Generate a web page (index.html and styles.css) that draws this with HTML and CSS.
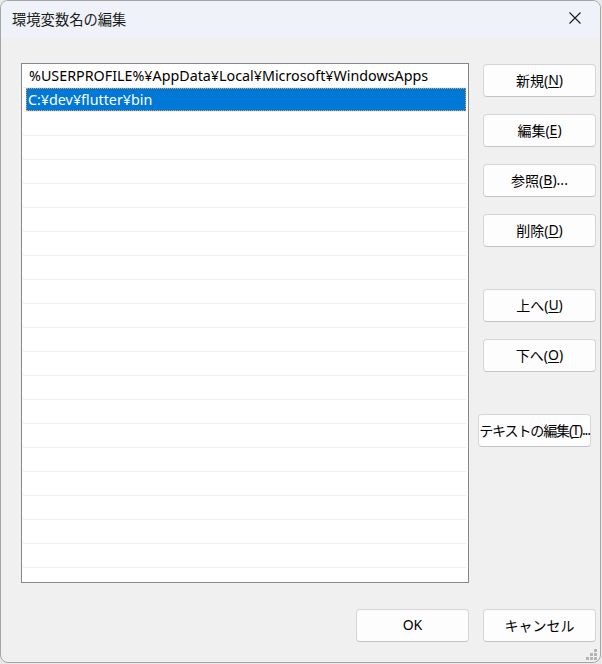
FILE: index.html
```html
<!DOCTYPE html>
<html lang="ja">
<head>
<meta charset="utf-8">
<title>環境変数名の編集</title>
<link rel="stylesheet" href="styles.css">
</head>
<body>
<div class="window">
  <div class="titlebar">
    <span class="title">環境変数名の編集</span>
    <span class="close">
      <svg width="12" height="12" viewBox="0 0 12 12"><path d="M0.5 0.5 L11.5 11.5 M11.5 0.5 L0.5 11.5" stroke="#1a1a1a" stroke-width="1.1" fill="none"/></svg>
    </span>
  </div>
  <div class="content">
    <div class="main">
      <div class="list">
        <div class="row"><span class="item">%USERPROFILE%¥AppData¥Local¥Microsoft¥WindowsApps</span></div>
        <div class="row"><span class="item selected">C:¥dev¥flutter¥bin</span></div>
        <div class="row"></div><div class="row"></div><div class="row"></div><div class="row"></div>
        <div class="row"></div><div class="row"></div><div class="row"></div><div class="row"></div>
        <div class="row"></div><div class="row"></div><div class="row"></div><div class="row"></div>
        <div class="row"></div><div class="row"></div><div class="row"></div><div class="row"></div>
        <div class="row"></div><div class="row"></div><div class="row"></div><div class="row"></div>
      </div>
      <div class="side">
        <button class="btn">新規(<u>N</u>)</button>
        <button class="btn">編集(<u>E</u>)</button>
        <button class="btn">参照(<u>B</u>)...</button>
        <button class="btn">削除(<u>D</u>)</button>
        <button class="btn group">上へ(<u>U</u>)</button>
        <button class="btn">下へ(<u>O</u>)</button>
        <button class="btn group wide">テキストの編集(<u>T</u>)...</button>
      </div>
    </div>
    <div class="footer">
      <button class="btn">OK</button>
      <button class="btn">キャンセル</button>
    </div>
  </div>
  <svg class="grip" width="12" height="12" viewBox="0 0 12 12">
    <rect x="8" y="0" width="3" height="3" fill="#b4b4b4"/>
    <rect x="4" y="4" width="3" height="3" fill="#b4b4b4"/>
    <rect x="8" y="4" width="3" height="3" fill="#b4b4b4"/>
    <rect x="0" y="8" width="3" height="3" fill="#b4b4b4"/>
    <rect x="4" y="8" width="3" height="3" fill="#b4b4b4"/>
    <rect x="8" y="8" width="3" height="3" fill="#b4b4b4"/>
  </svg>
</div>
</body>
</html>
```
FILE: styles.css
```css
* { box-sizing: border-box; }
html, body { margin: 0; padding: 0; }
body {
  background: #e9e9e9;
  font-family: "Noto Sans", "Noto Sans CJK JP", sans-serif;
  width: 602px;
  height: 664px;
  overflow: hidden;
}
.window {
  position: relative;
  width: 601px;
  height: 663px;
  border: 1px solid #a6a6a6;
  border-radius: 8px;
  background: #f0f0f0;
  overflow: hidden;
  display: flex;
  flex-direction: column;
}
.titlebar {
  height: 37px;
  background: #eff3f9;
  display: flex;
  align-items: center;
  justify-content: space-between;
  padding-left: 11px;
  flex: none;
}
.title {
  font-family: "Noto Sans CJK JP", sans-serif;
  font-size: 14.3px;
  color: #1a1a1a;
  margin-top: -2px;
}
.close {
  width: 46px;
  height: 37px;
  display: flex;
  align-items: center;
  justify-content: center;
  margin-right: 2px;
  margin-top: -4px;
}
.content {
  padding: 25px 4px 20px 20px;
  display: flex;
  flex-direction: column;
}
.main {
  display: flex;
  gap: 14px;
}
.list {
  width: 448px;
  height: 520px;
  border: 1px solid #828790;
  background: #fff;
  overflow: hidden;
  padding: 0 1px 0 1px;
}
.row {
  height: 24px;
  border-bottom: 1px solid #efefef;
  display: flex;
  padding-left: 3px;
  margin-right: 1px;
}
.item {
  display: flex;
  align-items: center;
  flex: 1;
  font-size: 14.3px;
  color: #000;
  padding-left: 3px;
  height: 23px;
  white-space: nowrap;
}
.selected {
  background: #0078d7;
  color: #fff;
  padding-left: 2px;
  outline: 1px dotted #f0a040;
  outline-offset: -1px;
}
.side {
  display: flex;
  flex-direction: column;
  gap: 17px;
  padding-top: 1px;
}
.btn {
  width: 113px;
  height: 33px;
  background: #fdfdfd;
  border: 1px solid #d6d6d6;
  border-bottom-color: #c4c4c4;
  border-radius: 4px;
  font-family: "Noto Sans", "Noto Sans CJK JP", sans-serif;
  font-size: 14px;
  color: #000;
  padding: 0 0 2px 0;
  display: flex;
  align-items: center;
  justify-content: center;
  white-space: nowrap;
}
.btn u { text-underline-offset: 2px; }
.group { margin-top: 25px; }
.wide {
  margin-left: -5px;
  letter-spacing: -1.1px;
}
.footer {
  display: flex;
  justify-content: flex-end;
  gap: 14px;
  margin-top: 26px;
}
.grip {
  position: absolute;
  right: 2px;
  bottom: 1px;
}
```
